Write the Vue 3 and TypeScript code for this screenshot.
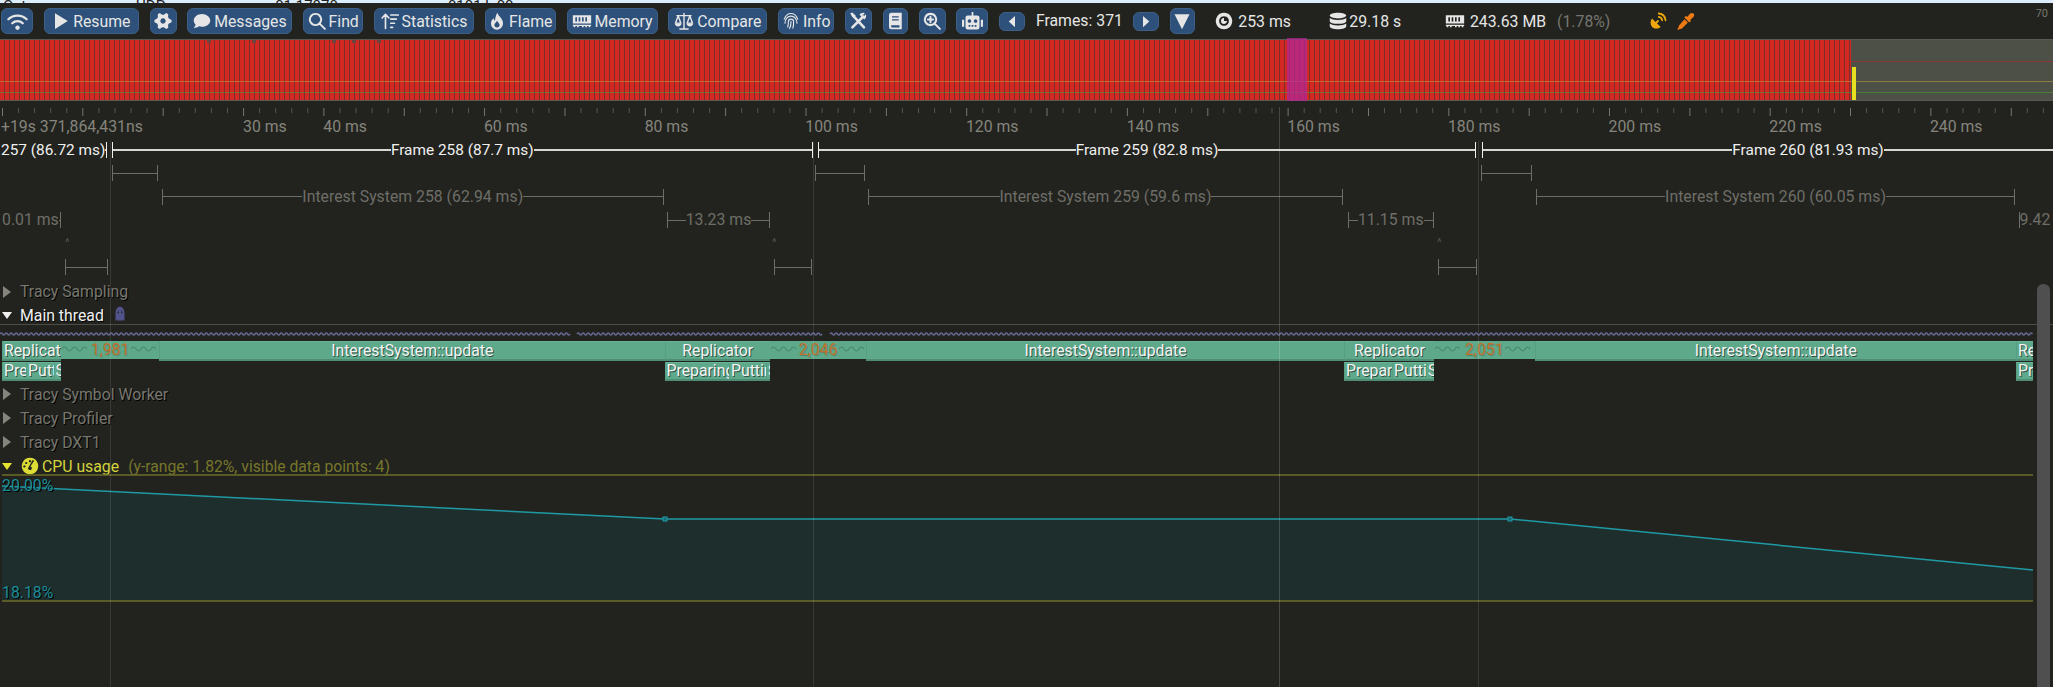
<script setup lang="ts">
type Icon = { fill?: string; stroke?: string; sw?: number }

function gearPath(): string {
  let d = ''
  const teeth = 6
  for (let i = 0; i < teeth * 4; i++) {
    const a = ((i - 0.5) * Math.PI * 2) / (teeth * 4)
    const r = i % 4 < 2 ? 11.5 : 8.5
    d += `${i ? 'L' : 'M'}${(12 + r * Math.cos(a)).toFixed(2)} ${(12 + r * Math.sin(a)).toFixed(2)}`
  }
  return d + 'zM12 8.4a3.6 3.6 0 1 0 .01 0z'
}

const memoryPath =
  'M1 5h22v10H1zM4 7.5v5h2v-5zM8 7.5v5h2v-5zM12 7.5v5h2v-5zM16 7.5v5h2v-5zM1 16.5h22v1.5h-1v1.5h-2V18h-2v1.5h-2V18h-2v1.5h-2V18H8v1.5H6V18H4v1.5H2V18H1z'

const icons: Record<string, Icon> = {
  wifi: { stroke: 'M1.5 9.5a15 15 0 0 1 21 0M6 14a8.6 8.6 0 0 1 12 0', sw: 2.5, fill: 'M12 16.6a2.5 2.5 0 1 0 .01 0z' },
  play: { fill: 'M4 1.5l17 10.5L4 22.5z' },
  gear: { fill: gearPath() },
  comment: { fill: 'M12 2.5C5.9 2.5 1 6.4 1 11.2c0 2.1 1 4 2.5 5.5-.4 1.9-1.5 3.6-2.5 4.8 2.8-.2 5.2-1.1 7-2.4 1.3.4 2.6.6 4 .6 6.1 0 11-3.9 11-8.5S18.1 2.5 12 2.5z' },
  search: { stroke: 'M10 2.5a7.5 7.5 0 1 0 .01 0zM15.5 15.5l7 7', sw: 2.6 },
  stats: { stroke: 'M6 22V3.5M1.5 8L6 3l4.5 5M13 4h10M13 9.5h7.5M13 15h5M13 20.5h2.5', sw: 2.2 },
  flame: { fill: 'M12.5.5c.5 4.5 7.5 7.5 7.5 14.5 0 4.5-3.5 8.5-8 8.5s-8-3.7-8-8.2c0-3.3 1.9-5.3 3.3-7.3.3 1.8.9 3 2 3.500C9.600 8 10.500 4 12.500.5zM12 20.500c2 0 3.500-1.500 3.500-3.300 0-2-2.200-3.500-3.500-5.700-1.300 2.200-3.500 3.700-3.500 5.700 0 1.800 1.500 3.300 3.500 3.300z' },
  memory: { fill: memoryPath },
  scale: { stroke: 'M12 3v18M7 21.5h10M3.5 5.5h17M5 6L1.8 14.5h6.4zM19 6l-3.2 8.5h6.4z', sw: 1.7, fill: 'M1 15h8c0 2-2 3.5-4 3.5S1 17 1 15zM15 15h8c0 2-2 3.5-4 3.5S15 17 15 15z' },
  finger: { stroke: 'M3 9.5C5 4.5 8 2 12 2s7 2.5 9 7.5M4 15c0-5.5 3.5-9.5 8-9.5s8 4 8 9.5M7.5 20c.8-2 1-4.5 1-7a3.5 3.5 0 0 1 7 0c0 3 0 6-1 8.5M12 12.5c0 4-.5 7-2 9.5', sw: 1.5 },
  tools: { stroke: 'M5 4.5l15 16M19 6L4.500 20.500', sw: 3.4, fill: 'M14 3.500c1.500-2 4.500-3 7-2l-3.500 3.500 1.500 1.500L22.500 3c1 2.500 0 5.500-2 7zM1.500 1.500l3-1L9 5l-3 3z' },
  book: { fill: 'M4 4a3 3 0 0 1 3-3h14v22H7a3 3 0 0 1-3-3zM8 5.500v1.800h9V5.500zM8 9.500v1.800h9V9.500zM7 17.500v3h11v-3z' },
  zoom: { stroke: 'M10 2.500a7.500 7.500 0 1 0 .01 0zM15.500 15.500l7 7M10 6.500v7M6.500 10h7', sw: 2.7 },
  robot: { fill: 'M11 1h2v4h4.500A2.500 2.500 0 0 1 20 7.500v11a2.500 2.500 0 0 1-2.500 2.500h-11A2.500 2.500 0 0 1 4 18.500v-11A2.500 2.500 0 0 1 6.500 5H11zM8.500 9.500a2 2 0 1 0 .01 0zM15.500 9.500a2 2 0 1 0 .01 0zM7.500 16v2h2v-2zM11 16v2h2v-2zM14.500 16v2h2v-2zM0 10h2.500v8H0zM21.500 10H24v8h-2.500z' },
  left: { fill: 'M16 3v18L6 12z' },
  right: { fill: 'M8 3v18l10-9z' },
  down: { fill: 'M2 3h20L12 23z' },
  eye: { fill: 'M12 1a11 11 0 1 0 .01 0zM12 5.500a6.500 6.500 0 1 1-.01 0zM12 8a4 4 0 0 0-.01 8c2.200 0 4-1.800 4-4h-4z' },
  db: { fill: 'M12 1c6 0 11 1.700 11 3.800S18 8.600 12 8.600 1 6.900 1 4.800 6 1 12 1zM1 8c2 1.600 6 2.600 11 2.600S21 9.600 23 8v4.200c0 2-5 3.600-11 3.600S1 14.200 1 12.200zM1 15.400c2 1.600 6 2.600 11 2.600s9-1 11-2.600v4c0 2-5 3.600-11 3.600S1 21.400 1 19.400z' },
  dish: { fill: 'M4 8.500L15.500 20c-3.500 3-9 2.500-11.500-.5S1.500 12 4 8.500z', stroke: 'M13 2c5 .5 8.500 4 9 9M13 6.500c2.500.3 4.200 2 4.500 4.500M9 15l3-3', sw: 2.4 },
  dropper: { fill: 'M13.500 6.500l3.500-4c1.500-1.700 3.700-1.700 5-.4s1.200 3.400-.4 4.900l-4 3.500 1.200 1.200-2.300 2.300-6.700-6.700 2.300-2.300zM10 9.500l4.500 4.500-7.500 7.500c-1 1-2.300.6-3.300 1.200L1.500 24 .5 23l1.300-2.200c.6-1 .2-2.300 1.200-3.300z' },
  ghost: { fill: 'M12 1c5 0 9 4 9 9v13l-3-2.500L15 23l-3-2.500L9 23l-3-2.500L3 23V10c0-5 4-9 9-9zM8.500 8a1.500 1.500 0 1 0 .01 0zM15.500 8a1.500 1.500 0 1 0 .01 0z' },
  gauge: { fill: 'M12 1a11 11 0 1 0 .01 0zM7 6.500a1.500 1.500 0 1 0 .01 0zM4.500 11a1.500 1.500 0 1 0 .01 0zM12 4a1.500 1.500 0 1 0 .01 0zM17.500 5l-5 7.500a2.500 2.500 0 1 1-3 2L15.500 4z' },
}

const tools = [
  { icon: 'wifi', w: 32 },
  { icon: 'play', label: 'Resume', w: 95 },
  { icon: 'gear', w: 27 },
  { icon: 'comment', label: 'Messages', w: 105 },
  { icon: 'search', label: 'Find', w: 60 },
  { icon: 'stats', label: 'Statistics', w: 100 },
  { icon: 'flame', label: 'Flame', w: 71 },
  { icon: 'memory', label: 'Memory', w: 91 },
  { icon: 'scale', label: 'Compare', w: 99 },
  { icon: 'finger', label: 'Info', w: 56 },
  { icon: 'tools', w: 27 },
  { icon: 'book', w: 25 },
  { icon: 'zoom', w: 27 },
  { icon: 'robot', w: 32 },
]

// ruler
const TICK = 16.07
const minor: string[] = []
const major: string[] = []
for (let i = 0; i * TICK < 2053; i++) {
  const x = (2.5 + i * TICK).toFixed(1)
  if (i % 5 === 0) major.push(`M${x} 7v8`)
  else minor.push(`M${x} 7v5`)
}
const rulerLabels = [
  { x: 1, text: '+19s 371,864,431ns' },
  ...[30, 40, 60, 80, 100, 120, 140, 160, 180, 200, 220, 240].map(ms => ({
    x: 243 + ((ms - 30) / 10) * 80.33,
    text: `${ms} ms`,
  })),
]

const notches = [207, 252, 332, 352, 377]

type Bracket = { x0: number; x1: number; text?: string; noL?: boolean; noR?: boolean; left?: boolean }
const lanes: { cls: string; items: Bracket[] }[] = [
  {
    cls: 'frames',
    items: [
      { x0: 1, x1: 106.5, text: '257 (86.72 ms)', noL: true, left: true },
      { x0: 111.5, x1: 813, text: 'Frame 258 (87.7 ms)' },
      { x0: 818, x1: 1476, text: 'Frame 259 (82.8 ms)' },
      // runs on past the right edge of the window
      { x0: 1482, x1: 2133, text: 'Frame 260 (81.93 ms)', noR: true },
    ],
  },
  { cls: '', items: [{ x0: 111.5, x1: 158 }, { x0: 815, x1: 865 }, { x0: 1481, x1: 1532 }] },
  {
    cls: '',
    items: [
      { x0: 162, x1: 663.5, text: 'Interest System 258 (62.94 ms)' },
      { x0: 868, x1: 1343, text: 'Interest System 259 (59.6 ms)' },
      { x0: 1536, x1: 2015, text: 'Interest System 260 (60.05 ms)' },
    ],
  },
  {
    cls: '',
    items: [
      { x0: 2, x1: 60.5, text: '0.01 ms', noL: true, left: true },
      { x0: 667, x1: 770, text: '13.23 ms' },
      { x0: 1348, x1: 1433.5, text: '11.15 ms' },
      { x0: 2018.5, x1: 2050, text: '9.42', noR: true, left: true },
    ],
  },
  { cls: 'carets', items: [] },
  { cls: '', items: [{ x0: 65, x1: 107.5 }, { x0: 774, x1: 812 }, { x0: 1438, x1: 1476.5 }] },
]
const carets = [65, 772, 1437]

function wave(x0: number, x1: number, y: number, period: number, amp: number): string {
  let d = `M${x0} ${y}`
  let up = true
  for (let x = x0; x + period / 2 <= x1; x += period / 2) {
    d += `q${period / 4} ${up ? -amp * 2 : amp * 2} ${period / 2} 0`
    up = !up
  }
  return d
}
const hiddenWave = [wave(0, 570, 9, 5, 1), wave(577, 823, 9, 5, 1), wave(830, 2033, 9, 5, 1)].join('')

type Zone = { x0: number; x1: number; text: string; left?: boolean; fold?: boolean }
const zonesTop: Zone[] = [
  { x0: 2, x1: 61, text: 'Replicator', left: true },
  { x0: 61, x1: 159, text: '1,981', fold: true },
  { x0: 159, x1: 664.5, text: 'InterestSystem::update' },
  { x0: 664.5, x1: 770, text: 'Replicator' },
  { x0: 770, x1: 866, text: '2,046', fold: true },
  { x0: 866, x1: 1344, text: 'InterestSystem::update' },
  { x0: 1344, x1: 1434, text: 'Replicator' },
  { x0: 1434, x1: 1534.5, text: '2,051', fold: true },
  { x0: 1534.5, x1: 2016, text: 'InterestSystem::update' },
  { x0: 2016, x1: 2033, text: 'Replicator', left: true },
]
const zonesBottom: Zone[] = [
  { x0: 2, x1: 26, text: 'Preparing', left: true },
  { x0: 26, x1: 53.5, text: 'Putting', left: true },
  { x0: 53.5, x1: 61, text: 'Sending', left: true },
  { x0: 664.5, x1: 729, text: 'Preparing', left: true },
  { x0: 729, x1: 766, text: 'Putting', left: true },
  { x0: 766, x1: 770, text: 'Sending', left: true },
  { x0: 1344, x1: 1392, text: 'Preparing', left: true },
  { x0: 1392, x1: 1426, text: 'Putting', left: true },
  { x0: 1426, x1: 1434, text: 'Sending', left: true },
  { x0: 2016, x1: 2033, text: 'Preparing', left: true },
]
// the count sits in the middle of a folded run, the wave stops either side of it
const foldWaves = zonesTop
  .filter(z => z.fold)
  .map(z => {
    const mid = (z.x0 + z.x1) / 2
    return wave(z.x0 + 1, mid - 20, 8, 10, 2) + wave(mid + 21, z.x1 - 1, 8, 10, 2)
  })
  .join('')

const cpuLine = '2,485 665,518 1510,518 2033,569'
const cpuArea = `2,600 ${cpuLine} 2033,600`

const guides = [
  { x: 110, top: 141, cls: '' },
  { x: 813, top: 141, cls: '' },
  { x: 1279, top: 107, cls: 'strong' },
  { x: 1478, top: 141, cls: '' },
]
</script>

<template>
  <div class="profiler">
    <div class="os-strip">
      <span>Oct</span><span>UDP</span><span>01 17870</span><span>0101 k 00</span>
    </div>

    <div class="toolbar">
      <button v-for="t in tools" :key="t.icon" type="button" class="btn" :style="{ width: t.w + 'px' }">
        <svg class="icon" :class="'icon--' + t.icon" viewBox="0 0 24 24">
          <path v-if="icons[t.icon].fill" :d="icons[t.icon].fill" class="f" />
          <path v-if="icons[t.icon].stroke" :d="icons[t.icon].stroke" class="s" :stroke-width="icons[t.icon].sw" />
        </svg>
        <span v-if="t.label">{{ t.label }}</span>
      </button>
      <button type="button" class="btn btn--small" style="width: 26px">
        <svg class="icon" viewBox="0 0 24 24"><path :d="icons.left.fill" class="f" /></svg>
      </button>
      <span class="frames-count">Frames: 371</span>
      <button type="button" class="btn btn--small" style="width: 26px">
        <svg class="icon" viewBox="0 0 24 24"><path :d="icons.right.fill" class="f" /></svg>
      </button>
      <button type="button" class="btn" style="width: 25px">
        <svg class="icon" viewBox="0 0 24 24"><path :d="icons.down.fill" class="f" /></svg>
      </button>
      <div class="stats">
        <span class="stat">
          <svg class="icon" viewBox="0 0 24 24"><path :d="icons.eye.fill" class="f" /></svg>253 ms
        </span>
        <span class="stat stat--tight">
          <svg class="icon" viewBox="0 0 24 24"><path :d="icons.db.fill" class="f" /></svg>29.18 s
        </span>
        <span class="stat">
          <svg class="icon icon--memory" viewBox="0 0 24 24"><path :d="icons.memory.fill" class="f" /></svg>243.63 MB
          <em>(1.78%)</em>
        </span>
        <svg class="icon icon--dish" viewBox="0 0 24 24">
          <path :d="icons.dish.fill" class="f" />
          <path :d="icons.dish.stroke" class="s" :stroke-width="icons.dish.sw" />
        </svg>
        <svg class="icon icon--dropper" viewBox="0 0 24 24"><path :d="icons.dropper.fill" class="f" /></svg>
      </div>
      <span class="fps">70</span>
    </div>

    <div class="overview">
      <div class="overview__bars">
        <i v-for="n in notches" :key="n" class="notch" :style="{ left: n + 'px' }"></i>
      </div>
      <i class="hline hline--red"></i>
      <i class="hline hline--orange"></i>
      <i class="hline hline--green"></i>
      <i class="selection"></i>
      <i class="cursor"></i>
    </div>

    <div class="ruler">
      <svg width="2053" height="20" class="ruler__ticks">
        <path :d="minor.join('')" stroke="#56564f" />
        <path :d="major.join('')" stroke="#77776f" />
      </svg>
      <span v-for="l in rulerLabels" :key="l.text" class="ruler__label" :style="{ left: l.x + 'px' }">{{ l.text }}</span>
    </div>

    <div v-for="(lane, i) in lanes" :key="i" class="lane" :class="lane.cls">
      <div
        v-for="b in lane.items"
        :key="b.x0"
        class="span"
        :class="{ 'no-l': b.noL, 'no-r': b.noR }"
        :style="{ left: b.x0 + 'px', width: b.x1 - b.x0 + 'px' }"
      >
        <i v-if="!b.left" class="span__line"></i>
        <span v-if="b.text">{{ b.text }}</span>
        <i class="span__line"></i>
      </div>
      <template v-if="lane.cls === 'carets'">
        <span v-for="c in carets" :key="c" class="caret" :style="{ left: c + 'px' }">^</span>
      </template>
    </div>

    <div class="track track--first">
      <i class="tri tri--right"></i>
      <span>Tracy Sampling</span>
    </div>
    <div class="track track--main">
      <i class="tri tri--down"></i>
      <span>Main thread</span>
      <svg class="ghost" viewBox="0 0 24 24" preserveAspectRatio="none"><path :d="icons.ghost.fill" class="f" /></svg>
    </div>

    <svg class="hidden-wave" width="2053" height="16">
      <path :d="hiddenWave" fill="none" stroke="#66668f" stroke-width="1.5" />
    </svg>

    <div class="zones">
      <div
        v-for="z in zonesTop"
        :key="z.x0"
        class="zone"
        :class="{ 'zone--left': z.left, 'zone--fold': z.fold }"
        :style="{ left: z.x0 + 'px', width: z.x1 - z.x0 + 'px' }"
      >
        <span>{{ z.text }}</span>
      </div>
      <svg class="zones__waves" width="2053" height="20">
        <path :d="foldWaves" fill="none" stroke="#4b8770" stroke-width="1.2" />
      </svg>
    </div>
    <div class="zones zones--low">
      <div
        v-for="z in zonesBottom"
        :key="z.x0"
        class="zone zone--left"
        :style="{ left: z.x0 + 'px', width: z.x1 - z.x0 + 'px' }"
      >
        <span>{{ z.text }}</span>
      </div>
    </div>

    <div class="track"><i class="tri tri--right"></i><span>Tracy Symbol Worker</span></div>
    <div class="track"><i class="tri tri--right"></i><span>Tracy Profiler</span></div>
    <div class="track"><i class="tri tri--right"></i><span>Tracy DXT1</span></div>
    <div class="track track--cpu">
      <i class="tri tri--down"></i>
      <svg class="gauge" viewBox="0 0 24 24"><path :d="icons.gauge.fill" class="f" /></svg>
      <span>CPU usage</span>
      <em>(y-range: 1.82%, visible data points: 4)</em>
    </div>

    <div class="plot">
      <svg width="2053" height="129" viewBox="0 473 2053 129">
        <polygon :points="cpuArea" fill="#1e2e2c" />
        <path d="M2 474H2033M2 600H2033" stroke="#6d6d2b" stroke-width="1.5" fill="none" />
        <polyline :points="cpuLine" fill="none" stroke="#1f9aa5" stroke-width="1.5" />
        <rect x="663" y="516" width="4" height="4" fill="#176a74" stroke="#1f9aa5" />
        <rect x="1508" y="516" width="4" height="4" fill="#176a74" stroke="#1f9aa5" />
      </svg>
      <span class="plot__max">20.00%</span>
      <span class="plot__min">18.18%</span>
    </div>

    <i v-for="g in guides" :key="g.x" class="guide" :class="g.cls" :style="{ left: g.x + 'px', top: g.top + 'px' }"></i>
    <i class="scrollbar"></i>
  </div>
</template>

<style scoped>
.profiler {
  position: relative;
  width: 2053px;
  height: 687px;
  overflow: hidden;
  background: #22231e;
  color: #e6e6e6;
  font-family: Roboto, "Liberation Sans", sans-serif;
  font-size: 15.8px;
}

.os-strip {
  height: 3px;
  padding-left: 3px;
  overflow: hidden;
  display: flex;
  background: #dcedfd;
  color: #222;
  font-size: 15px;
  line-height: 15px;
}
.os-strip span {
  margin-right: 110px;
  transform: translateY(-1px);
}

.toolbar {
  position: relative;
  height: 36px;
  padding: 5px 0 0 1px;
  box-sizing: border-box;
  display: flex;
  align-items: flex-start;
  gap: 10.8px;
}

.btn {
  height: 26px;
  padding: 0;
  flex: none;
  display: flex;
  align-items: center;
  justify-content: center;
  gap: 3px;
  background: #2d517a;
  border: 1px solid #3c5f87;
  border-radius: 6px;
  color: #e6e6e6;
  font: inherit;
}
.btn--small {
  height: 19px;
  margin-top: 4px;
}
.btn--small .icon {
  width: 15px;
  height: 15px;
}

.icon {
  width: 18px;
  height: 18px;
  flex: none;
}
.icon--memory,
.icon--scale {
  width: 20px;
  height: 20px;
}
.icon--wifi,
.icon--robot {
  width: 21px;
  height: 21px;
}
.icon--dish {
  color: #efa80c;
}
.icon--dropper {
  color: #ee7b12;
}
.f {
  fill: currentColor;
  fill-rule: evenodd;
}
.s {
  fill: none;
  stroke: currentColor;
  stroke-linecap: round;
  stroke-linejoin: round;
}

.frames-count {
  line-height: 26px;
  width: 86px;
  flex: none;
  white-space: nowrap;
}

.stats {
  margin-left: 10px;
  display: grid;
  grid-template-columns: 114px 115.6px 204px 28px 28px;
  align-items: center;
  height: 26px;
}
.stat {
  display: flex;
  align-items: center;
  gap: 5px;
  white-space: nowrap;
}
.stat--tight {
  gap: 2px;
}
.stat em {
  margin-left: 6px;
  font-style: normal;
  color: #767670;
}

.fps {
  position: absolute;
  top: 4px;
  right: 5px;
  font-size: 11px;
  color: #77776f;
}

.overview {
  position: relative;
  height: 62px;
  background: #4d5047;
  border-top: 1px solid #5a5a52;
  border-bottom: 1px solid #5a5a52;
  box-sizing: border-box;
}
.overview__bars {
  position: absolute;
  inset: 0 auto 0 0;
  width: 1851px;
  background: repeating-linear-gradient(90deg, #d42822 0 4px, #7a2f2a 4px 5px);
}
.notch {
  position: absolute;
  top: 0;
  width: 4px;
  height: 3px;
  background: #6d4440;
}
.hline {
  position: absolute;
  left: 0;
  right: 0;
  height: 1px;
}
.hline--red {
  left: 1851px;
  top: 21px;
  background: #8a3a36;
}
.hline--orange {
  top: 41px;
  background: rgba(190, 150, 60, 0.6);
}
.hline--green {
  top: 52px;
  background: rgba(70, 150, 50, 0.65);
}
.selection {
  position: absolute;
  left: 1287px;
  top: -2px;
  bottom: -1px;
  width: 20px;
  background: rgba(180, 40, 150, 0.75);
}
.cursor {
  position: absolute;
  left: 1852px;
  top: 27px;
  bottom: 0;
  width: 4px;
  background: #e6e020;
}

.ruler {
  position: relative;
  height: 37px;
}
.ruler__ticks {
  position: absolute;
  left: 0;
  top: 0;
}
.ruler__label {
  position: absolute;
  top: 17px;
  line-height: 18px;
  color: #85857d;
  white-space: nowrap;
}

.lane {
  position: relative;
  height: 23.5px;
  color: #6e6e68;
}
.lane.frames {
  color: #f0f0f0;
  font-size: 15.4px;
}
.span {
  position: absolute;
  top: 3.5px;
  height: 16px;
  box-sizing: border-box;
  border-left: 1px solid currentColor;
  border-right: 1px solid currentColor;
  display: flex;
  align-items: center;
  white-space: nowrap;
  line-height: 16px;
}
.span.no-l {
  border-left: none;
}
.span.no-r {
  border-right: none;
}
.span__line {
  flex: 1;
  height: 1px;
  background: currentColor;
}
.frames .span__line {
  height: 2px;
  background: #d8d8d2;
}
.caret {
  position: absolute;
  top: 4px;
  font-size: 11px;
  color: #55554f;
}

.track {
  height: 24px;
  padding-left: 3px;
  display: flex;
  align-items: center;
  gap: 7px;
  color: #77776f;
  text-shadow: 1px 1px 0 #000;
  box-sizing: border-box;
}
.track--first {
  margin-top: 1px;
  height: 23.5px;
}
.track--main {
  height: 21px;
  padding-left: 2px;
  padding-top: 3px;
  color: #f0f0f0;
  border-bottom: 1px solid #4c4c46;
}
.track--main .tri {
  margin-right: 1px;
}
.ghost {
  width: 12px;
  height: 16px;
  margin-left: 3px;
  margin-top: -3px;
  color: #53538c;
}
.tri {
  flex: none;
  width: 0;
  height: 0;
}
.tri--right {
  border-left: 8px solid #85857d;
  border-top: 6px solid transparent;
  border-bottom: 6px solid transparent;
  margin-right: 2px;
}
.tri--down {
  border-top: 7px solid #f0f0f0;
  border-left: 5.5px solid transparent;
  border-right: 5.5px solid transparent;
}
.track--cpu {
  height: 20px;
  padding-left: 2px;
  padding-top: 4px;
  gap: 3px;
  color: #d3d33c;
  text-shadow: none;
}
.track--cpu .tri--down {
  border-top-color: #e4e430;
  margin-right: 6px;
}
.gauge {
  width: 18px;
  height: 18px;
  color: #dcdc35;
}
.track--cpu em {
  margin-left: 6px;
  font-style: normal;
  font-size: 15.7px;
  color: #77772c;
}

.hidden-wave {
  display: block;
}

.zones {
  position: relative;
  height: 20px;
}
.zones--low {
  margin-top: 1px;
  height: 19.5px;
  margin-bottom: 1px;
}
.zone {
  position: absolute;
  top: 0;
  bottom: 0;
  box-sizing: border-box;
  display: flex;
  align-items: center;
  justify-content: center;
  overflow: hidden;
  white-space: nowrap;
  background: #5fa98b;
  border-top: 1px solid #69b498;
  border-left: 1px solid #579f83;
  border-bottom: 2px solid #4d8e74;
  color: #f4f4f4;
  text-shadow: 1px 1px 0 rgba(0, 0, 0, 0.55);
}
.zone--left {
  justify-content: flex-start;
  padding-left: 1px;
}
.zone--fold {
  border: none;
  bottom: 2px;
  color: #c2702a;
  text-shadow: 1px 1px 0 rgba(0, 0, 0, 0.2);
}
.zones__waves {
  position: absolute;
  left: 0;
  top: 0;
}

.plot {
  position: relative;
  height: 129px;
}
.plot svg {
  display: block;
}
.plot__max,
.plot__min {
  position: absolute;
  left: 2px;
  line-height: 16px;
  color: #1c8d9a;
  text-shadow: 1px 1px 0 #000;
}
.plot__max {
  top: 4px;
}
.plot__min {
  top: 111px;
}

.guide {
  position: absolute;
  bottom: 0;
  width: 1px;
  background: rgba(255, 255, 255, 0.1);
  z-index: 5;
}
.guide.strong {
  background: rgba(255, 255, 255, 0.17);
}
.scrollbar {
  position: absolute;
  left: 2037px;
  top: 284px;
  bottom: 0;
  width: 12.5px;
  background: #4f4f4f;
  border-radius: 6px 6px 0 0;
}
</style>
